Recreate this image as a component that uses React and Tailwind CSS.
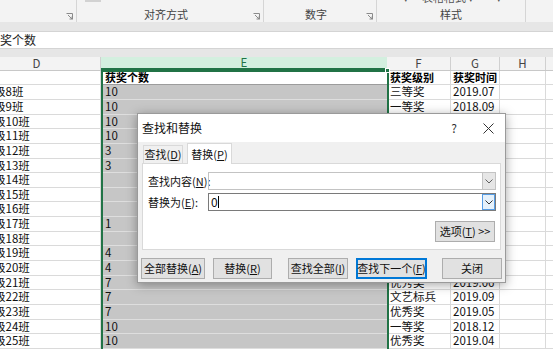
import React from "react";

const rows = [
  { d: "级8班", e: "10", f: "三等奖", g: "2019.07" },
  { d: "级9班", e: "10", f: "一等奖", g: "2018.09" },
  { d: "级10班", e: "10" },
  { d: "级11班", e: "10" },
  { d: "级12班", e: "3" },
  { d: "级13班", e: "3" },
  { d: "级14班", e: "" },
  { d: "级15班", e: "" },
  { d: "级16班", e: "" },
  { d: "级17班", e: "1" },
  { d: "级18班", e: "" },
  { d: "级19班", e: "4" },
  { d: "级20班", e: "4" },
  { d: "级21班", e: "7", f: "优秀奖", g: "2019.06" },
  { d: "级22班", e: "7", f: "文艺标兵", g: "2019.09" },
  { d: "级23班", e: "7", f: "优秀奖", g: "2019.05" },
  { d: "级24班", e: "10", f: "一等奖", g: "2018.12" },
  { d: "级25班", e: "10", f: "优秀奖", g: "2019.04" },
];

function Launcher() {
  return (
    <svg width="7" height="7" viewBox="0 0 7 7" className="shrink-0">
      <path d="M0.5 0.5H6.5V6.5" fill="none" stroke="#8a8a8a" strokeWidth="1" />
      <path d="M2 2L6 6M6 3.5V6H3.5" fill="none" stroke="#8a8a8a" strokeWidth="1" />
    </svg>
  );
}

function Chevron({ color = "#606060" }) {
  return (
    <svg width="8" height="5" viewBox="0 0 8 5">
      <path d="M0.5 0.5L4 4L7.5 0.5" fill="none" stroke={color} strokeWidth="1" />
    </svg>
  );
}

function Btn({ w, children, focus }) {
  return (
    <div
      className={`${w} h-[21px] flex items-center justify-center whitespace-nowrap text-[11px] leading-none bg-[#e1e1e1] border ${
        focus ? "border-[#0078d7] shadow-[inset_0_0_0_1px_#0078d7]" : "border-[#adadad]"
      }`}
    >
      {children}
    </div>
  );
}

export default function App() {
  return (
    <div className="relative w-[553px] h-[349px] overflow-hidden bg-white font-['Noto_Sans_CJK_SC',sans-serif] text-black whitespace-nowrap">
      {/* Ribbon */}
      <div className="h-[22px] bg-[#f3f3f3] flex overflow-hidden text-[11px] text-[#444] leading-none">
        <div className="w-[77px] border-r border-[#d5d5d5] flex items-end justify-end pr-[3px] pb-[2px]">
          <Launcher />
        </div>
        <div className="w-[187px] border-r border-[#d5d5d5] flex flex-col">
          <div className="ml-[8px] w-[16px] h-[2px] bg-[#d2d2d2]" />
          <div className="flex-1 flex items-end pb-[2px]">
            <div className="flex-1 text-center pl-[2px]">对齐方式</div>
            <div className="pr-[3px]">
              <Launcher />
            </div>
          </div>
        </div>
        <div className="w-[113px] border-r border-[#d5d5d5] flex items-end pb-[2px]">
          <div className="flex-1 text-center pl-[2px]">数字</div>
          <div className="pr-[3px]">
            <Launcher />
          </div>
        </div>
        <div className="w-[149px] border-r border-[#d5d5d5] flex flex-col">
          <div className="-mt-[7px] h-[10px] flex items-end text-[11px] text-[#555]">
            <span className="ml-[26px]">▾</span>
            <span className="ml-[13px]">表格格式 ▾</span>
            <span className="ml-[22px]">▾</span>
          </div>
          <div className="flex-1 flex items-end justify-center pb-[2px]">样式</div>
        </div>
        <div className="flex-1" />
      </div>
      {/* Band */}
      <div className="h-[9px] bg-[#e6e6e6]" />
      {/* Formula bar */}
      <div className="h-[18px] bg-white border-y border-[#d4d4d4] flex items-center text-[12px] leading-none text-[#222]">
        <span>奖个数</span>
      </div>
      {/* Band */}
      <div className="h-[8px] bg-[#e6e6e6]" />
      {/* Column headers */}
      <div className="h-[14px] flex bg-[#f3f3f3] text-[11.5px] leading-none text-[#444] border-b border-[#c8c8c8]">
        <div className="ml-[-27px] w-[128px] shrink-0 border-r border-[#d0d0d0] flex items-center justify-center">D</div>
        <div className="w-[286px] shrink-0 bg-[#d3efdf] text-[#217346] border-b-2 border-[#217346] flex items-center justify-center">E</div>
        <div className="w-[64px] shrink-0 border-r border-[#d0d0d0] flex items-center justify-center">F</div>
        <div className="w-[49px] shrink-0 border-r border-[#d0d0d0] flex items-center justify-center">G</div>
        <div className="w-[46px] shrink-0 border-r border-[#d0d0d0] flex items-center justify-center">H</div>
        <div className="flex-1" />
      </div>
      {/* Header data row */}
      <div className="h-[14.3px] flex text-[11px] leading-none font-bold">
        <div className="ml-[-27px] w-[128px] shrink-0 border-r border-b border-[#dadada]" />
        <div className="w-[286px] shrink-0 bg-white border-b border-[#9c9c9c] flex items-center pl-[4px]">获奖个数</div>
        <div className="w-[64px] shrink-0 border-r border-b border-[#dadada] flex items-center pl-[3px] overflow-hidden">获奖级别</div>
        <div className="w-[49px] shrink-0 border-r border-b border-[#dadada] flex items-center pl-[2px] overflow-hidden">获奖时间</div>
        <div className="w-[46px] shrink-0 border-r border-b border-[#dadada]" />
        <div className="flex-1 border-b border-[#dadada]" />
      </div>
      {rows.map((r, i) => (
        <div key={i} className="h-[14.65px] flex text-[11.5px] leading-none text-[#111]">
          <div className="ml-[-27px] w-[128px] shrink-0 border-r border-b border-[#dadada] flex items-center pl-[21px]">{r.d}</div>
          <div className="w-[286px] shrink-0 bg-[#c6c6c6] border-b border-[#dedede] flex items-center pl-[4px]">{r.e}</div>
          <div className="w-[64px] shrink-0 border-r border-b border-[#dadada] flex items-center pl-[3px] overflow-hidden">{r.f || ""}</div>
          <div className="w-[49px] shrink-0 border-r border-b border-[#dadada] flex items-center pl-[2px] overflow-hidden">{r.g || ""}</div>
          <div className="w-[46px] shrink-0 border-r border-b border-[#dadada]" />
          <div className="flex-1 border-b border-[#dadada]" />
        </div>
      ))}

      {/* Selection outline */}
      <div className="absolute left-[101px] top-[70px] w-[288px] h-[300px] border-2 border-[#217346] border-b-0" />
      <div className="absolute left-[385px] top-[68px] w-[5px] h-[5px] bg-[#217346] border border-white" />

      {/* Dialog */}
      <div className="absolute left-[137px] top-[113px] w-[369px] h-[170px] bg-[#f0f0f0] border border-[#9a9a9a] shadow-[0_2px_10px_rgba(0,0,0,0.35)] flex flex-col text-[11px] leading-none text-[#111]">
        <div className="h-[28px] bg-white flex items-center pl-[4px] text-[12px]">
          <span>查找和替换</span>
          <span className="ml-auto mr-[26px] text-[12px] text-[#333]">?</span>
          <svg width="11" height="11" viewBox="0 0 11 11" className="mr-[11px]">
            <path d="M0.5 0.5L10.5 10.5M10.5 0.5L0.5 10.5" stroke="#333" strokeWidth="1" />
          </svg>
        </div>
        {/* Tabs */}
        <div className="h-[21px] flex items-end pl-[5px] gap-[4px]">
          <div className="w-[40px] h-[18px] border border-b-0 border-[#d9d9d9] bg-[#f0f0f0] flex items-center justify-center">
            查找(<span className="underline">D</span>)
          </div>
          <div className="relative z-10 w-[45px] h-[21px] -mb-px border border-b-0 border-[#d9d9d9] bg-white flex items-center justify-center">
            替换(<span className="underline">P</span>)
          </div>
        </div>
        {/* Panel */}
        <div className="ml-[4px] w-[359px] h-[87px] border border-[#d9d9d9] bg-white flex flex-col">
          <div className="mt-[8px] h-[18px] flex items-center">
            <div className="w-[65px] pl-[5px]">
              查找内容(<span className="underline">N</span>):
            </div>
            <div className="w-[288px] h-[18px] border border-[#c3c3c3] flex justify-end">
              <div className="w-[13px] h-full bg-[#e6e6e6] border-l border-[#c3c3c3] flex items-center justify-center">
                <Chevron />
              </div>
            </div>
          </div>
          <div className="mt-[3px] h-[18px] flex items-center">
            <div className="w-[65px] pl-[5px]">
              替换为(<span className="underline">E</span>):
            </div>
            <div className="w-[288px] h-[18px] border border-[#7a7a7a] flex items-center">
              <span className="pl-[2px] text-[12px]">0</span>
              <span className="w-px h-[12px] bg-black" />
              <div className="ml-auto w-[13px] h-full bg-[#e5f1fb] border border-[#569de5] flex items-center justify-center">
                <Chevron color="#333" />
              </div>
            </div>
          </div>
          <div className="mt-[10px] flex justify-end pr-[5px]">
            <Btn w="w-[60px]">
              选项(<span className="underline">T</span>) &gt;&gt;
            </Btn>
          </div>
        </div>
        {/* Bottom buttons */}
        <div className="mt-[8px] flex pl-[3px]">
          <Btn w="w-[64px]">
            全部替换(<span className="underline">A</span>)
          </Btn>
          <div className="w-[8px]" />
          <Btn w="w-[59px]">
            替换(<span className="underline">R</span>)
          </Btn>
          <div className="w-[16px]" />
          <Btn w="w-[60px]">
            查找全部(<span className="underline">I</span>)
          </Btn>
          <div className="w-[8px]" />
          <Btn w="w-[71px]" focus>
            查找下一个(<span className="underline">F</span>)
          </Btn>
          <div className="w-[15px]" />
          <Btn w="w-[60px]">关闭</Btn>
        </div>
      </div>
    </div>
  );
}
